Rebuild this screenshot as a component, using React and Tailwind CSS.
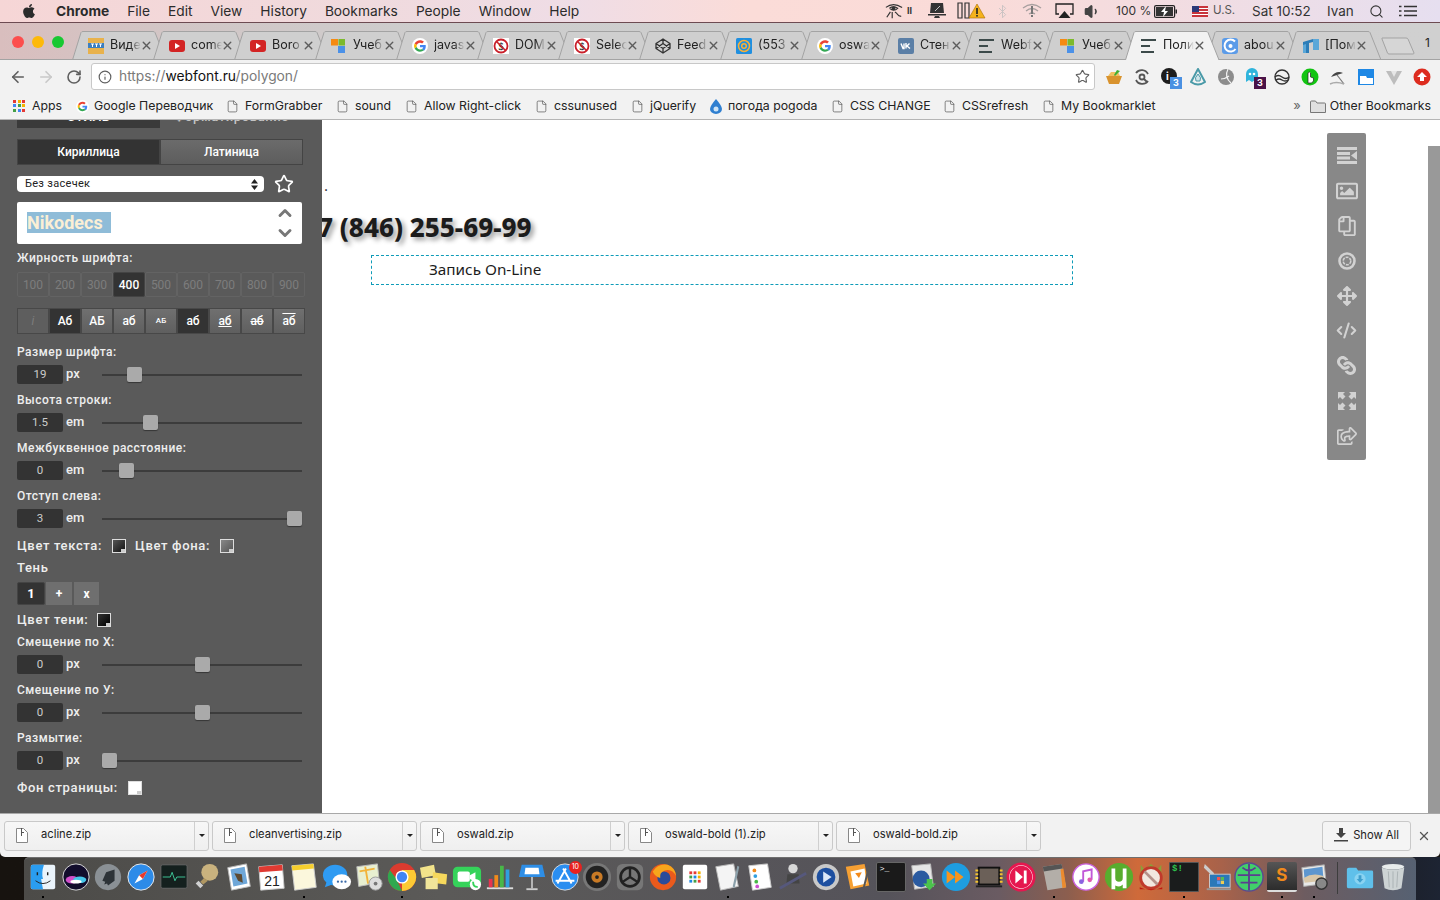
import { ArrowLeft, ArrowRight, RotateCw, Info, Star, File, Search, Bluetooth, ChevronUp, ChevronDown, X, CodeXml, Volume1 } from 'lucide-react';
import { FaApple, FaArrowsAlt, FaRegImage, FaRegCopy, FaLink, FaRegShareSquare } from 'react-icons/fa';

const ui = 'font-["Inter","Liberation_Sans",sans-serif]';

const menus = ['File', 'Edit', 'View', 'History', 'Bookmarks', 'People', 'Window', 'Help'];

function GoogleG({ size = 16 }) {
    return (
        <svg width={size} height={size} viewBox="6 6 36 36">
            <circle cx="24" cy="24" r="18" fill="#fff" />
            <path fill="#ea4335" d="M24 11c3.5 0 6.4 1.2 8.7 3.4l-4 4C27.500 17.200 25.900 16.600 24 16.600c-3.400 0-6.300 2.300-7.300 5.400l-4.700-3.600C14.200 14 18.700 11 24 11z" />
            <path fill="#4285f4" d="M37 24.400c0-1-.1-1.900-.3-2.800H24v5.300h7.300c-.3 1.700-1.300 3.200-2.800 4.100l4.500 3.500c2.600-2.400 4-6 4-10.100z" />
            <path fill="#fbbc05" d="M16.700 26.100c-.5-1.300-.5-2.800 0-4.100L12 18.400c-1.800 3.500-1.800 7.700 0 11.300z" />
            <path fill="#34a853" d="M24 37c3.500 0 6.500-1.200 8.700-3.200l-4.200-3.300c-1.200.8-2.700 1.300-4.500 1.300-3.400 0-6.300-2.300-7.300-5.400L12 29.700C14.200 34 18.700 37 24 37z" />
        </svg>
    );
}

function Lines({ color = '#3c4a4a' }) {
    return (
        <svg width="16" height="16" viewBox="0 0 16 16">
            <rect x="0" y="1" width="15" height="2" fill={color} />
            <rect x="0" y="7" width="9" height="2" fill={color} />
            <rect x="0" y="13" width="13" height="2" fill={color} />
        </svg>
    );
}

const favicons = {
    tv: (
        <svg width="16" height="16" viewBox="0 0 16 16">
            <rect width="16" height="16" fill="#e8b24c" />
            <rect y="5" width="16" height="5" fill="#3c7fc0" />
            <path d="M3 6h3M4.500 6v3M7 6h3M8.500 6v3M11 6h3M12.500 6v3" stroke="#fff" strokeWidth="1" />
        </svg>
    ),
    yt: (
        <svg width="16" height="16" viewBox="0 0 16 16">
            <rect y="2" width="16" height="12" rx="3" fill="#d32424" />
            <path d="M6 5l5 3-5 3z" fill="#fff" />
        </svg>
    ),
    squares: (
        <svg width="16" height="16" viewBox="0 0 16 16">
            <rect y="1" width="7" height="6.500" fill="#f58a12" />
            <rect x="7.500" y="1" width="6.500" height="6.500" fill="#7cba2d" />
            <rect x="7" y="8" width="7" height="7" fill="#4b91e8" />
        </svg>
    ),
    g: <GoogleG />,
    noS: (
        <svg width="16" height="16" viewBox="0 0 16 16">
            <rect width="16" height="16" fill="#fff" />
            <circle cx="8" cy="8" r="6.500" fill="none" stroke="#c9202a" strokeWidth="1.800" />
            <text x="8" y="11.500" fontSize="10" fontWeight="700" textAnchor="middle" fill="#222" fontFamily="Liberation Serif, serif">$</text>
            <path d="M3.500 3.500l9 9" stroke="#c9202a" strokeWidth="1.600" />
        </svg>
    ),
    pen: (
        <svg width="16" height="16" viewBox="0 0 16 16" fill="none" stroke="#333" strokeWidth="1.300" strokeLinejoin="round">
            <path d="M8 1l7 4.500v5L8 15l-7-4.500v-5zM8 1v4.500M8 10.500V15M1 5.500l7 5 7-5M1 10.500l7-5 7 5" />
        </svg>
    ),
    mail: (
        <svg width="16" height="16" viewBox="0 0 16 16">
            <rect width="16" height="16" rx="1.500" fill="#1f8fe0" />
            <circle cx="8" cy="8" r="5.500" fill="none" stroke="#fbb034" strokeWidth="1.500" />
            <circle cx="8" cy="8" r="2.300" fill="none" stroke="#fbb034" strokeWidth="1.500" />
        </svg>
    ),
    vk: (
        <svg width="16" height="16" viewBox="0 0 16 16">
            <rect width="16" height="16" rx="2" fill="#5b7fa6" />
            <path d="M3 5.500l2 5h1V5.500M11.500 5.500L9 8l3 2.500M8 5v5.500" fill="none" stroke="#fff" strokeWidth="1.400" />
        </svg>
    ),
    lines: <Lines />,
    about: (
        <svg width="16" height="16" viewBox="0 0 16 16">
            <rect width="16" height="16" rx="3" fill="#5b9be8" />
            <path d="M13 3.500A6 6 0 1 0 13.500 11" fill="none" stroke="#fff" strokeWidth="2" />
            <circle cx="8.500" cy="8" r="2" fill="#fff" />
        </svg>
    ),
    box: (
        <svg width="16" height="16" viewBox="0 0 16 16">
            <path d="M0 4h6v11H0zM10 1h6v11h-6z" fill="#5aa7d8" />
            <path d="M0 4l10-3v3L6 5v10H3V6L0 7z" fill="#2c7db8" />
        </svg>
    ),
};

const tabs = [
    ['tv', 'Виде'], ['yt', 'come'], ['yt', 'Boro'], ['squares', 'Учеб'],
    ['g', 'javas'], ['noS', 'DOM'], ['noS', 'Selec'], ['pen', 'Feed'],
    ['mail', '(553'], ['g', 'oswa'], ['vk', 'Стен'], ['lines', 'Webf'],
    ['squares', 'Учеб'], ['lines', 'Поли', true], ['about', 'abou'], ['box', '[Пом'],
];

function Tab({ icon, title, active }) {
    return (
        <div className={`relative -mr-[14px] h-[29px] w-[95px] shrink-0 ${active ? 'z-10' : ''}`}>
            <svg className="absolute inset-0" width="95" height="29" viewBox="0 0 95 29">
                <path d="M0.500 29L9 1.500Q9.500 0.500 11 0.500H81Q82.500 0.500 83 1.500L94 29" fill={active ? '#f2f2f2' : '#cfcfcf'} stroke="#a3a3a3" />
            </svg>
            <div className="relative flex h-full items-center pl-4">
                <span className="w-[22px] shrink-0">{favicons[icon]}</span>
                <span className="w-[31px] overflow-hidden text-[12.5px] whitespace-nowrap text-[#222] [mask-image:linear-gradient(90deg,#000_65%,transparent)]">{title}</span>
                <X size={13} strokeWidth={2.6} className="-ml-[1px] shrink-0 text-[#5c5c5c]" />
            </div>
        </div>
    );
}

function MenuBar() {
    return (
        <div className="flex h-[22px] shrink-0 items-center bg-[linear-gradient(90deg,#f6d6d6_0%,#f0dadd_25%,#efdde6_40%,#fbdcd8_52%,#fadbd8_68%,#f0dde4_85%,#e6dff0_100%)] text-[13.75px] text-[#2b2b2b]">
            <FaApple size={16} className="ml-[21px] text-[#2b2b2b]" />
            <span className="ml-[19px] font-bold">Chrome</span>
            <div className="ml-[18px] flex gap-[18px]">
                {menus.map((m) => (
                    <span key={m}>{m}</span>
                ))}
            </div>
            <StatusIcons />
        </div>
    );
}

function StatusIcons() {
    return (
        <div className="relative ml-auto flex h-full items-center text-[14px] text-[#333]">
            <svg width="18" height="18" viewBox="0 0 20 18" fill="none" stroke="#333" strokeWidth="1.300">
                <path d="M1 5Q9-1 19 5M5 6q4-3 9 0q-4 4-9 0M8 10v7M6 10l-4 6M11 10q2 1 3 3t4 2" />
                <circle cx="9.500" cy="6" r="1.500" fill="#333" />
            </svg>
            <span className="ml-[4px] w-[6px] text-[9px] font-bold">II</span>
            <svg className="ml-[15px]" width="18" height="16" viewBox="0 0 18 16">
                <path d="M3 0h12l1 10H2z" fill="#333" />
                <path d="M0 11h18v1.500H0z" fill="#333" />
                <path d="M7 13h4l1 2H6z" fill="#333" />
                <path d="M7 8l5-5" stroke="#fff" strokeWidth=".7" />
            </svg>
            <svg className="ml-[11px]" width="29" height="20" viewBox="0 0 29 20">
                <path d="M1 2h4v15H1zM8 2h4v15H8z" fill="none" stroke="#333" strokeWidth="1.200" />
                <path d="M20 3l8 14H12z" fill="#f5b21c" stroke="#a76d00" strokeWidth=".6" />
                <rect x="19.200" y="7" width="1.600" height="6" fill="#222" />
                <rect x="19.200" y="14" width="1.600" height="1.600" fill="#222" />
            </svg>
            <Bluetooth size={15} strokeWidth={1.500} className="ml-[9px] text-[#c9c2c2]" />
            <svg className="ml-[12px]" width="20" height="16" viewBox="0 0 20 16" fill="none" stroke="#a79f9f" strokeWidth="1.300">
                <path d="M1 5q9-7 18 0M4 8q6-5 12 0M7 11q3-2 6 0" />
                <rect x="9" y="3" width="2" height="8" fill="#777" stroke="none" />
                <rect x="9" y="12" width="2" height="2" fill="#777" stroke="none" />
            </svg>
            <svg className="ml-[13px]" width="19" height="16" viewBox="0 0 19 16">
                <path d="M4 11H1V1h17v10h-3" fill="none" stroke="#222" strokeWidth="1.300" />
                <path d="M9.500 8l6 7h-12z" fill="#222" />
            </svg>
            <Volume1 size={17} fill="#444" className="ml-[10px] text-[#444]" />
            <span className="ml-[15px] w-[33px] text-[12px] whitespace-nowrap">100 %</span>
            <svg className="ml-[5px]" width="23" height="13" viewBox="0 0 23 13">
                <rect x=".600" y=".600" width="20" height="11.800" rx="1.500" fill="none" stroke="#222" strokeWidth="1.200" />
                <rect x="2" y="2" width="17" height="9" fill="#333" />
                <path d="M12 1L7 7h3l-1 5 5-6h-3z" fill="#fff" />
                <rect x="21.500" y="4.500" width="1.500" height="4" fill="#222" />
            </svg>
            <svg className="ml-[15px]" width="16" height="11" viewBox="0 0 16 11">
                <rect width="16" height="11" fill="#c8343c" />
                <path d="M0 2.500h16M0 5.500h16M0 8.500h16" stroke="#fff" strokeWidth="1" />
                <rect width="7" height="6" fill="#2b3a78" />
            </svg>
            <span className="ml-[5px] w-[21px] text-[11.5px] whitespace-nowrap text-[#555]">U.S.</span>
            <span className="ml-[18px] w-[60px] text-[13.5px] whitespace-nowrap">Sat 10:52</span>
            <span className="ml-[15px] w-[26px] text-[13.5px]">Ivan</span>
            <Search size={15} strokeWidth={1.700} className="ml-[16px]" />
            <svg className="mr-[23px] ml-[15px]" width="18" height="12" viewBox="0 0 18 12">
                <path d="M5 1.500h13M5 6h13M5 10.500h13M0 1.500h2.500M0 6h2.500M0 10.500h2.500" stroke="#333" strokeWidth="1.500" />
            </svg>
        </div>
    );
}

function TabStrip() {
    return (
        <div className="relative flex h-[38px] shrink-0 items-end border-t border-[#6d4b52] bg-[linear-gradient(90deg,#d9bebe_0%,#d2c6c6_12%,#cdcdcd_30%,#d0d0d0_100%)] pl-[72px]">
            <div className="absolute top-[13px] left-[12px] flex gap-2">
                <span className="h-3 w-3 rounded-full bg-[#fc4e4d]" />
                <span className="h-3 w-3 rounded-full bg-[#fdb90a]" />
                <span className="h-3 w-3 rounded-full bg-[#18c832]" />
            </div>
            {tabs.map(([icon, title, active], i) => (
                <Tab key={i} icon={icon} title={title} active={active} />
            ))}
            <svg className="mb-[5px] ml-[13px]" width="34" height="18" viewBox="0 0 34 18">
                <path d="M1 1h24q1.500 0 2 1l6 14q0 1-1 1H8q-1 0-1.500-1L1 2z" fill="#d6d6d6" stroke="#a3a3a3" />
            </svg>
            <span className="mb-[8px] ml-[10px] text-[12px] text-[#222]">1</span>
            <div className="absolute right-0 bottom-0 left-0 h-px bg-[#a3a3a3]" />
        </div>
    );
}

const extIcons = [
    <svg width="18" height="18" viewBox="0 0 18 18"><path d="M1 8h16l-3 8H4z" fill="#d9932e" /><path d="M3 8l3-4h7l2 4z" fill="#f0c060" /><path d="M9 7l3-5 3 1-5 5z" fill="#3fae34" /></svg>,
    <svg width="18" height="18" viewBox="0 0 18 18" fill="none" stroke="#555" strokeWidth="1.800"><path d="M3 5a7 7 0 0 1 12 1M15 13a7 7 0 0 1-12-1" /><circle cx="9" cy="9" r="2.500" /><path d="M11 11l3 3" /></svg>,
    <div className="relative h-[18px] w-[18px]"><div className="h-4 w-4 rounded-full bg-[#1d1d1d]" /><span className="absolute top-[1px] left-[5px] text-[10px] font-bold text-white">i</span><span className="absolute -right-[3px] -bottom-[3px] flex h-[12px] w-[12px] items-center justify-center bg-[#4a90e2] text-[9px] font-bold text-white">3</span></div>,
    <svg width="18" height="18" viewBox="0 0 18 18" fill="none"><path d="M9 1l7 13q-7 5-14 0z" stroke="#4a9aa8" strokeWidth="2" strokeLinejoin="round" /><path d="M9 6q4 4 2 7H7Q5 10 9 6z" fill="#cfe5ea" stroke="#4a9aa8" /></svg>,
    <svg width="18" height="18" viewBox="0 0 18 18"><circle cx="9" cy="9" r="8" fill="#8c8c8c" /><path d="M11 1Q7 9 14 15M4 11q4 0 8-3" stroke="#f2f2f2" strokeWidth="1.200" fill="none" /></svg>,
    <div className="relative h-[18px] w-[18px]"><svg width="14" height="16" viewBox="0 0 14 16"><path d="M1 14V6a6 6 0 0 1 12 0v8l-3-2-3 2-3-2z" fill="#2fb4dc" /><circle cx="5" cy="6" r="1.300" fill="#fff" /><circle cx="9" cy="6" r="1.300" fill="#fff" /></svg><span className="absolute -right-[3px] -bottom-[3px] flex h-[12px] w-[12px] items-center justify-center bg-[#4a1248] text-[9px] font-bold text-white">3</span></div>,
    <svg width="18" height="18" viewBox="0 0 18 18" fill="none" stroke="#333" strokeWidth="1.400"><circle cx="9" cy="9" r="7" /><path d="M2 9q3-3 7 0t7 0M3 12q3-2 6 0t6 0" /></svg>,
    <svg width="18" height="18" viewBox="0 0 18 18"><circle cx="9" cy="9" r="8.500" fill="#12c412" /><path d="M7 15V5q1.500-2 2.500 0v4l3 1v3l-2 2z" fill="#fff" stroke="#222" strokeWidth=".7" /></svg>,
    <svg width="18" height="18" viewBox="0 0 18 18"><path d="M2 9q5-7 12-4z" fill="#444" /><path d="M8 7l7 9" stroke="#777" strokeWidth="1.200" /><path d="M1 16q6-3 14 0" stroke="#aaa" strokeWidth="1.500" fill="none" /></svg>,
    <svg width="18" height="18" viewBox="0 0 18 18"><rect width="16" height="16" x="1" y="1" fill="#1e88e5" /><path d="M3 8h6l1 2h6v6H3z" fill="#fff" /></svg>,
    <svg width="18" height="18" viewBox="0 0 18 18"><path d="M1 3h16l-8 14z" fill="#bdbdbd" /><path d="M6 3h6L9 9z" fill="#e6e6e6" /></svg>,
    <svg width="18" height="18" viewBox="0 0 18 18"><circle cx="9" cy="9" r="8.500" fill="#dd2c1f" /><path d="M9 4l5 5h-3v4H7V9H4z" fill="#fff" /></svg>,
];

function Toolbar() {
    return (
        <div className="flex h-[33px] shrink-0 items-center bg-[#f2f2f2]">
            <ArrowLeft size={18} strokeWidth={2.200} className="ml-[9px] text-[#5f5f5f]" />
            <ArrowRight size={18} strokeWidth={2.200} className="ml-[10px] text-[#c9c9c9]" />
            <RotateCw size={16} strokeWidth={2.400} className="ml-[11px] text-[#5f5f5f]" />
            <div className="ml-[9px] flex h-[27px] w-[1004px] items-center rounded-[3px] border border-[#c8c8c8] bg-white">
                <Info size={14} strokeWidth={2} className="ml-[6px] text-[#5f5f5f]" />
                <span className="ml-[7px] text-[13.8px] text-[#7a7a7a]">
                    https://<span className="text-[#111]">webfont.ru</span>/polygon/
                </span>
                <Star size={15} strokeWidth={1.800} className="mr-[4px] ml-auto text-[#5f5f5f]" />
            </div>
            <div className="ml-[5px] flex">
                {extIcons.map((icon, i) => (
                    <div key={i} className="flex w-[28px] items-center justify-center">{icon}</div>
                ))}
            </div>
        </div>
    );
}

function Bm({ children, icon, className = '' }) {
    return (
        <div className={`flex items-center gap-[6px] ${className}`}>
            {icon || <File size={13} strokeWidth={1.300} className="text-[#555]" />}
            <span className="text-[12.3px] whitespace-nowrap text-[#222]">{children}</span>
        </div>
    );
}

function BookmarksBar() {
    const dots = ['#e53935', '#f4b400', '#e53935', '#4285f4', '#43a047', '#f4b400', '#43a047', '#4285f4', '#e53935'];
    return (
        <div className="flex h-[27px] shrink-0 items-center border-b border-[#b5b5b5] bg-[#f2f2f2] pl-[13px]">
            <Bm
                className="w-[63px]"
                icon={
                    <div className="grid h-[13px] w-[13px] grid-cols-3 gap-[1px]">
                        {dots.map((c, i) => (
                            <span key={i} className="h-[3px] w-[3px]" style={{ background: c }} />
                        ))}
                    </div>
                }
            >
                Apps
            </Bm>
            <Bm className="w-[150px] !gap-[5px]" icon={<GoogleG size={13} />}>Google Переводчик</Bm>
            <Bm className="w-[110px]">FormGrabber</Bm>
            <Bm className="w-[69px]">sound</Bm>
            <Bm className="w-[130px]">Allow Right-click</Bm>
            <Bm className="w-[96px]">cssunused</Bm>
            <Bm className="w-[79px]">jQuerify</Bm>
            <Bm
                className="w-[121px]"
                icon={
                    <svg width="12" height="15" viewBox="0 0 12 15">
                        <path d="M6 0Q12 7 12 10A6 5 0 0 1 0 10Q0 7 6 0z" fill="#2f7fd0" />
                        <circle cx="6" cy="10" r="2.500" fill="#cfe4f5" />
                    </svg>
                }
            >
                погода pogoda
            </Bm>
            <Bm className="w-[112px]">CSS CHANGE</Bm>
            <Bm className="w-[99px]">CSSrefresh</Bm>
            <Bm>My Bookmarklet</Bm>
            <span className="ml-auto text-[13px] text-[#666]">»</span>
            <svg className="ml-[9px]" width="16" height="13" viewBox="0 0 16 13">
                <path d="M.500 12.500V2q0-1 1-1h4l1.500 2h7.500q1 0 1 1v8.500z" fill="#e0e0e0" stroke="#777" />
            </svg>
            <span className="mr-[9px] ml-[4px] text-[12.3px] whitespace-nowrap text-[#222]">Other Bookmarks</span>
        </div>
    );
}

function Label({ children, big, className = '' }) {
    return (
        <div className={`h-4 ${big ? 'text-[13px] tracking-[0.65px]' : 'text-[12px] tracking-[0.5px]'} leading-4 font-medium whitespace-nowrap text-[#eee] ${className}`}>
            {children}
        </div>
    );
}

function Swatch({ color, className = '' }) {
    return (
        <span className={`relative inline-block h-[14px] w-[14px] shrink-0 border border-[#ddd] ${className}`} style={{ background: color }}>
            <span className="absolute right-0 bottom-0 h-[3px] w-[4px] bg-[#ccc]" />
        </span>
    );
}

function Slider({ label, value, unit, pos }) {
    return (
        <div className="mb-2">
            <Label>{label}</Label>
            <div className="mt-1 flex h-5 items-center">
                <div className="flex h-[19px] w-[46px] items-center justify-center rounded-[2px] bg-[#333] pt-px text-[11.5px] text-[#ccc]">{value}</div>
                <span className="w-[39px] pl-[3px] text-[13px] font-medium text-[#eee]">{unit}</span>
                <div className="relative mt-[2px] h-[2px] w-[200px] bg-[#3c3c3c]">
                    <div className="absolute -top-[7px] h-[15px] w-[15px] rounded-[2px] bg-[#aaa] shadow-[0_1px_1px_rgba(0,0,0,0.4)]" style={{ left: pos }} />
                </div>
            </div>
        </div>
    );
}

function Panel() {
    const weights = [100, 200, 300, 400, 500, 600, 700, 800, 900];
    const styles = [
        ['i', 'bg-[#5e5e5e] font-normal italic text-[#7d7d7d] text-[12px]'],
        ['Аб', 'bg-[#333] text-white text-[12px]'],
        ['АБ', 'text-white text-[12px] bg-[linear-gradient(#707070,#5f5f5f)]'],
        ['аб', 'text-white text-[12px] bg-[linear-gradient(#707070,#5f5f5f)]'],
        ['АБ', 'text-white text-[8px] bg-[linear-gradient(#707070,#5f5f5f)]'],
        ['аб', 'bg-[#333] text-white text-[12px]'],
        ['аб', 'underline text-white text-[12px] bg-[linear-gradient(#707070,#5f5f5f)]'],
        ['аб', 'line-through text-white text-[12px] bg-[linear-gradient(#707070,#5f5f5f)]'],
        ['аб', 'overline text-white text-[12px] bg-[linear-gradient(#707070,#5f5f5f)]'],
    ];
    return (
        <div className={`h-full w-[322px] shrink-0 overflow-hidden bg-[#5a5a5a] pl-[17px] font-["Roboto",sans-serif]`}>
            <div className="-mt-4 flex h-6 w-[286px]">
                <div className="flex w-[143px] items-center justify-center bg-[#3a3a3a] pt-[2px] text-[13px] font-medium text-white">СТИЛЬ</div>
                <div className="flex flex-1 items-center justify-center pt-[2px] text-[13px] font-medium tracking-[0.6px] text-[#c4c4c4]">Форматирование</div>
            </div>
            <div className="mt-[11px] flex h-[26px] w-[286px] text-[12px] font-medium text-white">
                <div className="flex w-[143px] items-center justify-center border border-[#444] bg-[#333]">Кириллица</div>
                <div className="flex flex-1 items-center justify-center border border-[#444] bg-[linear-gradient(#6b6b6b,#5d5d5d)]">Латиница</div>
            </div>
            <div className="mt-[11px] flex h-4 items-center">
                <div className="flex h-4 w-[247px] items-center justify-between rounded-[4px] bg-white pt-px pr-2 pl-2 text-[11px] tracking-[0.3px] text-[#222]">
                    <span>Без засечек</span>
                    <svg width="7" height="11" viewBox="0 0 7 11" className="-mr-[2px]">
                        <path d="M3.500 0L7 4.500H0zM3.500 11L0 6.500h7z" fill="#222" />
                    </svg>
                </div>
                <Star size={20} strokeWidth={2} className="ml-[10px] text-white" />
            </div>
            <div className="relative mt-[10px] flex h-[42px] w-[285px] items-center rounded-[2px] bg-white pb-[1px] pl-[10px]">
                <span className="bg-[#8fbcd8] pr-2 text-[18px] leading-[21px] font-bold text-[#fbefd5]">Nikodecs</span>
                <ChevronUp size={20} strokeWidth={3.5} className="absolute top-[1px] right-[7px] text-[#777]" />
                <ChevronDown size={20} strokeWidth={3.5} className="absolute right-[7px] bottom-[1px] text-[#777]" />
            </div>
            <Label className="mt-[6px]">Жирность шрифта:</Label>
            <div className="mt-[6px] flex h-[25px]">
                {weights.map((w) => (
                    <div
                        key={w}
                        className={`flex w-8 items-center justify-center rounded-[2px] border text-[12px] ${w === 400 ? 'border-[#444] bg-[#333] font-medium text-white' : 'border-[#636363] text-[#7d7d7d]'}`}
                    >
                        {w}
                    </div>
                ))}
            </div>
            <div className="mt-[11px] flex h-[26px]">
                {styles.map(([t, k], i) => (
                    <div key={i} className={`flex w-8 items-center justify-center border border-[#484848] font-medium ${k}`}>
                        {t}
                    </div>
                ))}
            </div>
            <div className="mt-[10px]">
                <Slider label="Размер шрифта:" value="19" unit="px" pos={25} />
                <Slider label="Высота строки:" value="1.5" unit="em" pos={41} />
                <Slider label="Межбуквенное расстояние:" value="0" unit="em" pos={17} />
                <Slider label="Отступ слева:" value="3" unit="em" pos={185} />
            </div>
            <div className="mt-[10px] flex h-4 items-center">
                <Label big>Цвет текста:</Label>
                <Swatch color="linear-gradient(135deg,#555,#111)" className="ml-[10px]" />
                <Label big className="ml-[9px]">Цвет фона:</Label>
                <Swatch color="linear-gradient(135deg,#888,#555)" className="ml-[10px]" />
            </div>
            <Label big className="mt-[6px]">Тень</Label>
            <div className="mt-[6px] flex h-[23px] gap-[1px] text-[12px] font-bold text-white">
                <div className="flex w-[28px] items-center justify-center rounded-[2px] border border-[#444] bg-[#333] text-[13px]">1</div>
                <div className="flex w-[26px] items-center justify-center bg-[#6f6f6f]">+</div>
                <div className="ml-[1px] flex w-[25px] items-center justify-center bg-[#6f6f6f]">x</div>
            </div>
            <div className="mt-[7px] flex h-4 items-center">
                <Label big>Цвет тени:</Label>
                <Swatch color="linear-gradient(135deg,#333,#000)" className="ml-[9px]" />
            </div>
            <div className="mt-[6px]">
                <Slider label="Смещение по X:" value="0" unit="px" pos={93} />
                <Slider label="Смещение по У:" value="0" unit="px" pos={93} />
                <Slider label="Размытие:" value="0" unit="px" pos={0} />
            </div>
            <div className="mt-[10px] flex h-4 items-center">
                <Label big>Фон страницы:</Label>
                <Swatch color="#fff" className="ml-[10px]" />
            </div>
        </div>
    );
}

function ToolRail() {
    const cls = 'text-[#d2d2d2]';
    const icons = [
        <svg width="20" height="17" viewBox="0 0 20 17" fill="#d2d2d2">
            <path d="M0 0h20v3H0zM0 5h13v3H0zM0 9.500h13v3H0zM0 14h20v3H0zM20 4v9l-6-4.500z" />
        </svg>,
        <FaRegImage size={22} className={cls} />,
        <FaRegCopy size={20} className={`${cls} -scale-x-100`} />,
        <svg width="18" height="18" viewBox="0 0 18 18">
            <circle cx="9" cy="9" r="7.500" fill="none" stroke="#d2d2d2" strokeWidth="2.600" />
            <circle cx="9" cy="9" r="3.800" fill="none" stroke="#d2d2d2" strokeWidth="1.600" strokeDasharray="3 1" />
        </svg>,
        <FaArrowsAlt size={20} className={cls} />,
        <CodeXml size={21} strokeWidth={2.4} className={cls} />,
        <FaLink size={19} className={`${cls} rotate-90`} />,
        <svg width="18" height="18" viewBox="0 0 18 18" fill="#d2d2d2">
            <path d="M0 0h7L5 2l2.500 2.500-3 3L2 5 0 7zM18 0v7l-2-2-2.500 2.500-3-3L13 2l-2-2zM0 18v-7l2 2 2.500-2.500 3 3L5 16l2 2zM18 18h-7l2-2-2.500-2.500 3-3L16 13l2-2z" />
        </svg>,
        <FaRegShareSquare size={20} className={cls} />,
    ];
    return (
        <div className="absolute top-[13px] left-[1005px] flex h-[327px] w-[39px] flex-col items-center rounded-[2px] bg-[#888] pt-[5px]">
            {icons.map((icon, i) => (
                <div key={i} className="flex h-[35px] shrink-0 items-center justify-center">{icon}</div>
            ))}
        </div>
    );
}

function Main() {
    return (
        <div className="relative min-w-0 flex-1 overflow-hidden bg-white">
            <div className="pt-[56px] pl-[2px] text-[14px] leading-[20px] text-[#111]">.</div>
            <div className="mt-[15px] -ml-[19px] text-[26px] leading-[32px] font-extrabold whitespace-nowrap text-[#1c1c1c] [font-family:'Noto_Sans',sans-serif] [text-shadow:3px_3px_5px_rgba(0,0,0,0.4)]">
                +7 (846) 255-69-99
            </div>
            <div className="mt-[12px] ml-[49px] flex h-[30px] w-[702px] items-center border border-dashed border-[#0e9bb8] pl-[57px] text-[15.3px] text-[#1c1c1c] [font-family:'Noto_Sans',sans-serif]">
                <span className="-mt-[1px]">Запись On-Line</span>
            </div>
            <ToolRail />
        </div>
    );
}

function Scrollbar() {
    return (
        <div className="h-full w-3 shrink-0 bg-white pt-[26px]">
            <div className="h-full bg-[#999]" />
        </div>
    );
}

function DownloadItem({ name }) {
    return (
        <div className="flex h-[30px] w-[205px] shrink-0 items-center rounded-[3px] border border-[#c9c9c9] bg-[linear-gradient(#f7f7f7,#efefef)]">
            <svg className="ml-[11px]" width="12" height="15" viewBox="0 0 12 15">
                <path d="M.500.500h7L11.500 4.500v10H.500z" fill="#fff" stroke="#888" />
                <path d="M5 0v8h1V5h2V4H6V0z" fill="#555" />
            </svg>
            <span className="ml-[13px] flex-1 pb-[2px] text-[11.2px] whitespace-nowrap text-[#222]">{name}</span>
            <div className="flex h-full w-[14px] items-center justify-center border-l border-[#cfcfcf]">
                <span className="h-0 w-0 border-x-[3px] border-t-[3px] border-x-transparent border-t-[#222]" />
            </div>
        </div>
    );
}

function DownloadBar() {
    const files = ['acline.zip', 'cleanvertising.zip', 'oswald.zip', 'oswald-bold (1).zip', 'oswald-bold.zip'];
    return (
        <div className="flex h-full items-center rounded-b-[5px] border-t border-[#a8a8a8] bg-[#f2f2f2] pl-1">
            <div className="flex gap-[3px]">
                {files.map((f) => (
                    <DownloadItem key={f} name={f} />
                ))}
            </div>
            <div className="ml-auto flex h-[30px] w-[89px] items-center justify-center gap-[5px] rounded-[3px] border border-[#c9c9c9] bg-[#f4f4f4] pb-[1px] text-[11.2px] text-[#222]">
                <svg width="14" height="14" viewBox="0 0 14 14" fill="#444">
                    <path d="M5 0h4v5h3L7 10 2 5h3zM0 12h14v1.500H0z" />
                </svg>
                Show All
            </div>
            <X size={14} strokeWidth={2.2} className="mr-[9px] ml-[6px] text-[#555]" />
        </div>
    );
}

const dockIcons = [
    // Finder
    <svg viewBox="0 0 32 32"><rect x="3" y="3" width="26" height="26" rx="2" fill="#eaf4fb" /><path d="M3 5q0-2 2-2h12q-3 9-1 15h-2q1 6 2 11H5q-2 0-2-2z" fill="#2a9df0" /><path d="M8 20q8 6 16 0" stroke="#222" fill="none" /><path d="M10 11v3M21 11v3" stroke="#222" strokeWidth="1.500" /></svg>,
    // Siri
    <svg viewBox="0 0 32 32"><circle cx="16" cy="16" r="14" fill="#120d2c" stroke="#ddd" /><ellipse cx="12" cy="19" rx="7" ry="4" fill="#d24fc9" /><ellipse cx="20" cy="19" rx="7" ry="3.500" fill="#46c5e8" /><ellipse cx="16" cy="21" rx="6" ry="2" fill="#fff" /></svg>,
    // Launchpad
    <svg viewBox="0 0 32 32"><circle cx="16" cy="16" r="14" fill="#8a9095" /><path d="M23 8l-9 3-4 9 3 1-1 3 3-1 1 2 7-5z" fill="#2d3338" /></svg>,
    // Safari
    <svg viewBox="0 0 32 32"><circle cx="16" cy="16" r="14" fill="#2d8be8" stroke="#eee" /><path d="M23 9l-9 5-5 9 9-5z" fill="#fff" /><path d="M23 9l-9 5 4 4z" fill="#e9392c" /></svg>,
    // Activity Monitor
    <svg viewBox="0 0 32 32"><rect x="2" y="3" width="28" height="25" rx="2" fill="#14201e" stroke="#666" /><path d="M4 16h8l2-5 3 9 2-4h9" stroke="#3ec99a" fill="none" /></svg>,
    // bulb
    <svg viewBox="0 0 32 32"><circle cx="20" cy="11" r="9" fill="#c9b27e" /><path d="M14 17l-4 4 3 3 5-4z" fill="#b09762" /><path d="M5 23l5 5 3-3-5-5z" fill="#d0d0d0" /></svg>,
    // Mail bird
    <svg viewBox="0 0 32 32"><path d="M4 6l20-4 4 24-20 4z" fill="#fff" stroke="#bbb" /><path d="M7 8l15-3 3 18-15 3z" fill="#6fa7d8" /><path d="M11 12l8 1 1 9-5-2z" fill="#5d4a32" /></svg>,
    // Calendar
    <svg viewBox="0 0 32 32"><path d="M3 5l25-2 2 25-25 2z" fill="#fff" stroke="#ccc" /><path d="M3 5l25-2 .5 6-25 2z" fill="#e03a32" /><text x="17" y="26" fontSize="15" textAnchor="middle" fill="#222" fontFamily="Liberation Sans, sans-serif">21</text></svg>,
    // Notes
    <svg viewBox="0 0 32 32"><path d="M3 4l23-2 3 25-23 3z" fill="#fbf7dc" stroke="#ccc" /><path d="M3 4l23-2 .5 5-23 2z" fill="#f7cf2d" /></svg>,
    // Messages
    <svg viewBox="0 0 32 32"><ellipse cx="14" cy="14" rx="13" ry="11" fill="#2f9bf2" /><path d="M5 21l-2 6 8-3z" fill="#2f9bf2" /><ellipse cx="21" cy="21" rx="10" ry="8" fill="#fff" /><circle cx="17" cy="21" r="1.200" fill="#3a6aa8" /><circle cx="21" cy="21" r="1.200" fill="#3a6aa8" /><circle cx="25" cy="21" r="1.200" fill="#3a6aa8" /></svg>,
    // Maps
    <svg viewBox="0 0 32 32"><path d="M3 5l22-3 2 20-22 4z" fill="#e8efd0" stroke="#bbb" /><path d="M6 10l16-3M12 5l3 18" stroke="#f2b33a" strokeWidth="2" /><circle cx="23" cy="23" r="7" fill="#ddd" stroke="#999" /><circle cx="23" cy="23" r="2" fill="#777" /></svg>,
    // Chrome
    <svg viewBox="0 0 32 32"><circle cx="16" cy="16" r="15" fill="#db3b2f" /><path d="M16 31A15 15 0 0 1 3 8.500L10 18z" fill="#2fa84f" /><path d="M16 31a15 15 0 0 0 13-22.500H16z" fill="#fcc934" /><circle cx="16" cy="16" r="7" fill="#fff" /><circle cx="16" cy="16" r="5.500" fill="#4285f4" /></svg>,
    // Stickies
    <svg viewBox="0 0 32 32"><path d="M1 6l15-3 2 11-15 3z" fill="#f2e38a" /><path d="M15 11l15 2-1 11-15-2z" fill="#f6d85c" /><path d="M7 17h13v12H7z" fill="#f0e59a" /></svg>,
    // FaceTime
    <svg viewBox="0 0 32 32"><rect x="1" y="5" width="30" height="22" rx="5" fill="#35d35a" /><rect x="6" y="10" width="13" height="11" rx="2" fill="#fff" /><path d="M19 14l6-3v10l-6-3z" fill="#fff" /><circle cx="25" cy="24" r="6" fill="#fff" /><path d="M22.500 21q0 6 5 5.500" stroke="#35d35a" strokeWidth="2" fill="none" /></svg>,
    // Numbers
    <svg viewBox="0 0 32 32"><path d="M2 29h28v-2H2z" fill="#ddd" /><rect x="4" y="18" width="4" height="9" fill="#e8344f" /><rect x="10" y="14" width="4" height="13" fill="#f28a1c" /><rect x="16" y="4" width="4" height="23" fill="#48b848" /><rect x="22" y="8" width="4" height="19" fill="#2f9fe0" /></svg>,
    // Keynote
    <svg viewBox="0 0 32 32"><path d="M5 3h22l3 13H2z" fill="#2e8ee6" /><path d="M9 6h14l1 7H8z" fill="#fff" /><rect x="15" y="16" width="2" height="12" fill="#bbb" /><path d="M10 30h12v-2H10z" fill="#ccc" /></svg>,
    // App Store
    <div className="relative"><svg viewBox="0 0 32 32"><circle cx="16" cy="16" r="14" fill="#2a8ef0" stroke="#ddd" /><path d="M17 7l-9 16M14 7l9 16M6 20h20" stroke="#fff" strokeWidth="2" /></svg><span className="absolute -top-[1px] -right-[2px] flex h-[13px] w-[13px] items-center justify-center rounded-full bg-[#e8211f] text-[7px] text-white">10</span></div>,
    // speaker
    <svg viewBox="0 0 32 32"><circle cx="16" cy="16" r="15" fill="#777" /><circle cx="16" cy="16" r="12" fill="#222" /><circle cx="16" cy="16" r="6" fill="#c97a25" /><circle cx="16" cy="16" r="2" fill="#222" /></svg>,
    // System Preferences
    <svg viewBox="0 0 32 32"><rect x="2" y="2" width="28" height="28" rx="6" fill="#777" /><circle cx="16" cy="16" r="10" fill="none" stroke="#222" strokeWidth="3" /><path d="M16 16V6M16 16l9 6M16 16l-9 6" stroke="#222" strokeWidth="2.500" /></svg>,
    // Firefox
    <svg viewBox="0 0 32 32"><circle cx="16" cy="16" r="14" fill="#ea5a1c" /><circle cx="17" cy="17" r="7" fill="#2a4b9a" /><path d="M5 10q6-9 16-7 8 3 9 12-4-8-12-6-6 2-5 8-6-2-8-7z" fill="#f7a51c" /></svg>,
    // Launchpad grid
    <svg viewBox="0 0 32 32"><rect x="3" y="3" width="26" height="26" rx="2" fill="#fff" /><rect x="10" y="10" width="3" height="3" fill="#e53935" /><rect x="14.500" y="10" width="3" height="3" fill="#e53935" /><rect x="19" y="10" width="3" height="3" fill="#f4b400" /><rect x="10" y="14.500" width="3" height="3" fill="#43a047" /><rect x="14.500" y="14.500" width="3" height="3" fill="#1e88e5" /><rect x="19" y="14.500" width="3" height="3" fill="#f4b400" /><rect x="10" y="19" width="3" height="3" fill="#1e88e5" /><rect x="14.500" y="19" width="3" height="3" fill="#43a047" /><rect x="19" y="19" width="3" height="3" fill="#e53935" /></svg>,
    // TextEdit
    <svg viewBox="0 0 32 32"><path d="M3 5l19-3 5 24-19 4z" fill="#f4f4f4" stroke="#bbb" /><path d="M26 4l-5 22 2 2 5-23z" fill="#8ba0aa" /></svg>,
    // Reminders
    <svg viewBox="0 0 32 32"><path d="M4 4l20-2 4 25-20 3z" fill="#fff" stroke="#ccc" /><circle cx="10" cy="9" r="2" fill="#f28a1c" /><circle cx="11" cy="15" r="2" fill="#2f9fe0" /><circle cx="12" cy="21" r="2" fill="#48b848" /><circle cx="13" cy="26" r="2" fill="#cb4fd0" /></svg>,
    // Automator
    <svg viewBox="0 0 32 32"><circle cx="16" cy="7" r="5" fill="#d8d8d8" /><path d="M10 13h12l1 10H9z" fill="#444" /><path d="M2 28L30 12" stroke="#56587c" strokeWidth="3" /></svg>,
    // QuickTime
    <svg viewBox="0 0 32 32"><circle cx="16" cy="16" r="14" fill="#c9c9c9" /><circle cx="16" cy="16" r="10" fill="#1d4fa0" /><path d="M13 10l9 6-9 6z" fill="#dce8f8" /></svg>,
    // Pages
    <svg viewBox="0 0 32 32"><path d="M3 5l20-3 5 23-20 4z" fill="#f6a033" /><path d="M8 10l15-3 2 16-14 3z" fill="#fff" /><path d="M13 12l7-1-3 6z" fill="#f28a1c" /><path d="M28 4l-6 24" stroke="#555" strokeWidth="2" /></svg>,
    // Terminal
    <div className="flex h-full w-full items-start rounded-[2px] border border-[#666] bg-[#1a1a1a] pl-[3px] font-mono text-[8px] leading-[11px] text-white">&gt;_</div>,
    // Utility
    <svg viewBox="0 0 32 32"><path d="M4 4l20-2 3 24-20 3z" fill="#e6e6e6" stroke="#bbb" /><circle cx="14" cy="18" r="9" fill="#2a5aa0" /><path d="M20 18h6v5h4l-7 7-7-7h4z" fill="#4cc24c" /></svg>,
    // Fast
    <svg viewBox="0 0 32 32"><circle cx="16" cy="16" r="15" fill="#1e9de0" /><path d="M6 9l9 7-9 7zM15 9l9 7-9 7z" fill="#f7941d" /></svg>,
    // Video
    <svg viewBox="0 0 32 32"><rect x="5" y="6" width="22" height="18" fill="#6b6058" stroke="#111" strokeWidth="2" /><path d="M2 27h28v-2H2z" fill="#222" /><path d="M3 8v14M29 8v14" stroke="#f2c230" strokeWidth="3" strokeDasharray="2 2" /></svg>,
    // Red
    <svg viewBox="0 0 32 32"><circle cx="16" cy="16" r="14" fill="#fff" stroke="#e5174f" strokeWidth="3" /><circle cx="16" cy="16" r="12" fill="#e5174f" /><path d="M10 9l8 7-8 7zM19 9h3v14h-3z" fill="#fff" /></svg>,
    // Calculator
    <svg viewBox="0 0 32 32"><path d="M4 5l20-3 5 25-20 3z" fill="#b3aea8" /><path d="M4 5l20-3 1 5-20 3z" fill="#555" /><path d="M23 8l3-1 3 20-4 1z" fill="#ec8b2e" /></svg>,
    // iTunes
    <svg viewBox="0 0 32 32"><circle cx="16" cy="16" r="14" fill="#fff" stroke="#cb63e0" strokeWidth="1.500" /><path d="M13 21V10l9-2v11" stroke="#c158d8" strokeWidth="2" fill="none" /><circle cx="11" cy="21" r="2.500" fill="#8a63e0" /><circle cx="20" cy="19" r="2.500" fill="#e05ab0" /></svg>,
    // uTorrent
    <svg viewBox="0 0 32 32"><circle cx="16" cy="16" r="15" fill="#58ad2e" /><path d="M8 7h4v10q0 4 4 4t4-4V7h4v21h-4v-4q-2 2-4 2-2 0-4-1v4H8z" fill="#fff" /></svg>,
    // No sign
    <svg viewBox="0 0 32 32"><path d="M5 3l4 5 7-6 7 6 4-5v14H5z" fill="#8aa03a" /><circle cx="16" cy="17" r="11" fill="#f2e7df" stroke="#c0392b" strokeWidth="3" /><path d="M9 10l14 14" stroke="#b5918a" strokeWidth="3" /><path d="M4 27q12 6 24 0v2H4z" fill="#c0180f" /></svg>,
    // Terminal green
    <div className="flex h-full w-full items-start rounded-[1px] border border-[#555] bg-[#1a1c1c] pl-[2px] font-mono text-[9px] leading-[12px] font-bold text-[#2dc24c]">$!</div>,
    // Windows
    <svg viewBox="0 0 32 32"><path d="M3 2l10 10-2 3L2 6z" fill="#ccc" /><rect x="8" y="13" width="22" height="14" fill="#2a78b8" stroke="#ccc" /><rect x="16" y="16" width="3.500" height="3.500" fill="#e55" /><rect x="20" y="16" width="3.500" height="3.500" fill="#5b5" /><rect x="16" y="20" width="3.500" height="3.500" fill="#59e" /><rect x="20" y="20" width="3.500" height="3.500" fill="#ec5" /><path d="M5 29h26" stroke="#999" strokeWidth="2" /></svg>,
    // Green globe
    <svg viewBox="0 0 32 32"><circle cx="16" cy="16" r="15" fill="#41cf6a" stroke="#5b4a90" strokeWidth="1.500" /><path d="M4 14h24M7 22h18M16 2v28M9 6q7 6 14 0" stroke="#5b3e90" strokeWidth="2" fill="none" /></svg>,
    // Sublime
    <div className="flex h-full w-full items-center justify-center rounded-[2px] border-b-2 border-[#ddd] bg-[linear-gradient(#555,#2c2c2c)] text-[17px] font-bold text-[#f08a1c]">S</div>,
    // Preview
    <svg viewBox="0 0 32 32"><path d="M3 6l24-3 2 20-24 3z" fill="#e8e8e8" stroke="#aaa" /><path d="M5 8l20-3 1 12-20 3z" fill="#5d96cf" /><path d="M5 17q10-6 21-2v5l-20 2z" fill="#d9c7a8" /><circle cx="24" cy="23" r="6" fill="#888" stroke="#333" strokeWidth="1.500" /></svg>,
];

const dockRunning = [0, 8, 11, 21, 31, 35, 38, 39];

function Dock() {
    return (
        <div className="mx-[24px] flex h-full items-start rounded-t-[5px] border-t border-[#6f6f6f] bg-[linear-gradient(90deg,#4c4b48_0%,#5b5a58_30%,#55535a_62%,#6a5b62_70%,#8c5e4e_75%,#cf6a3a_80%,#a8624a_86%,#6d5c60_92%,#566172_100%)] pt-[4px] pl-[3px]">
            {dockIcons.map((icon, i) => (
                <div key={i} className="relative flex h-[32px] w-[32.6px] shrink-0 justify-center">
                    <div className="h-[30px] w-[30px]">{icon}</div>
                    {dockRunning.includes(i) && <span className="absolute top-[34px] h-[2px] w-[2px] bg-black" />}
                </div>
            ))}
            <div className="flex h-[32px] w-[13px] shrink-0 justify-center">
                <div className="h-full w-px bg-[#3d3d3d]" />
            </div>
            <div className="flex h-[32px] w-[32.6px] shrink-0 justify-center">
                <svg width="30" height="30" viewBox="0 0 32 32">
                    <path d="M2 8q0-2 2-2h8l2 3h15q1 0 1 2v15q0 2-2 2H4q-2 0-2-2z" fill="#5fc0ea" />
                    <circle cx="16" cy="18" r="6" fill="#8ad3f1" />
                    <path d="M14.500 14h3v4h2l-3.500 4-3.500-4h2z" fill="#3d9fce" />
                </svg>
            </div>
            <div className="flex h-[32px] w-[32.6px] shrink-0 justify-center">
                <svg width="30" height="30" viewBox="0 0 32 32">
                    <ellipse cx="16" cy="5" rx="12" ry="3" fill="#e8ecec" />
                    <path d="M4 6l3 22q9 4 18 0l3-22q-12 4-24 0z" fill="#cdd3d4" />
                    <path d="M11 10l1 17M16 10v18M21 10l-1 17" stroke="#aab1b3" />
                </svg>
            </div>
        </div>
    );
}

export default function App() {
    return (
        <div className={`flex h-[900px] w-[1440px] flex-col overflow-hidden bg-[#17130f] ${ui}`}>
            <MenuBar />
            <TabStrip />
            <Toolbar />
            <BookmarksBar />
            <div className="flex h-[693px] shrink-0">
                <Panel />
                <Main />
                <Scrollbar />
            </div>
            <div className="h-[44px] shrink-0">
                <DownloadBar />
            </div>
            <div className="h-[43px] shrink-0 bg-[linear-gradient(90deg,#17130f_0%,#1a1512_90%,#1d2433_100%)]">
                <Dock />
            </div>
        </div>
    );
}
